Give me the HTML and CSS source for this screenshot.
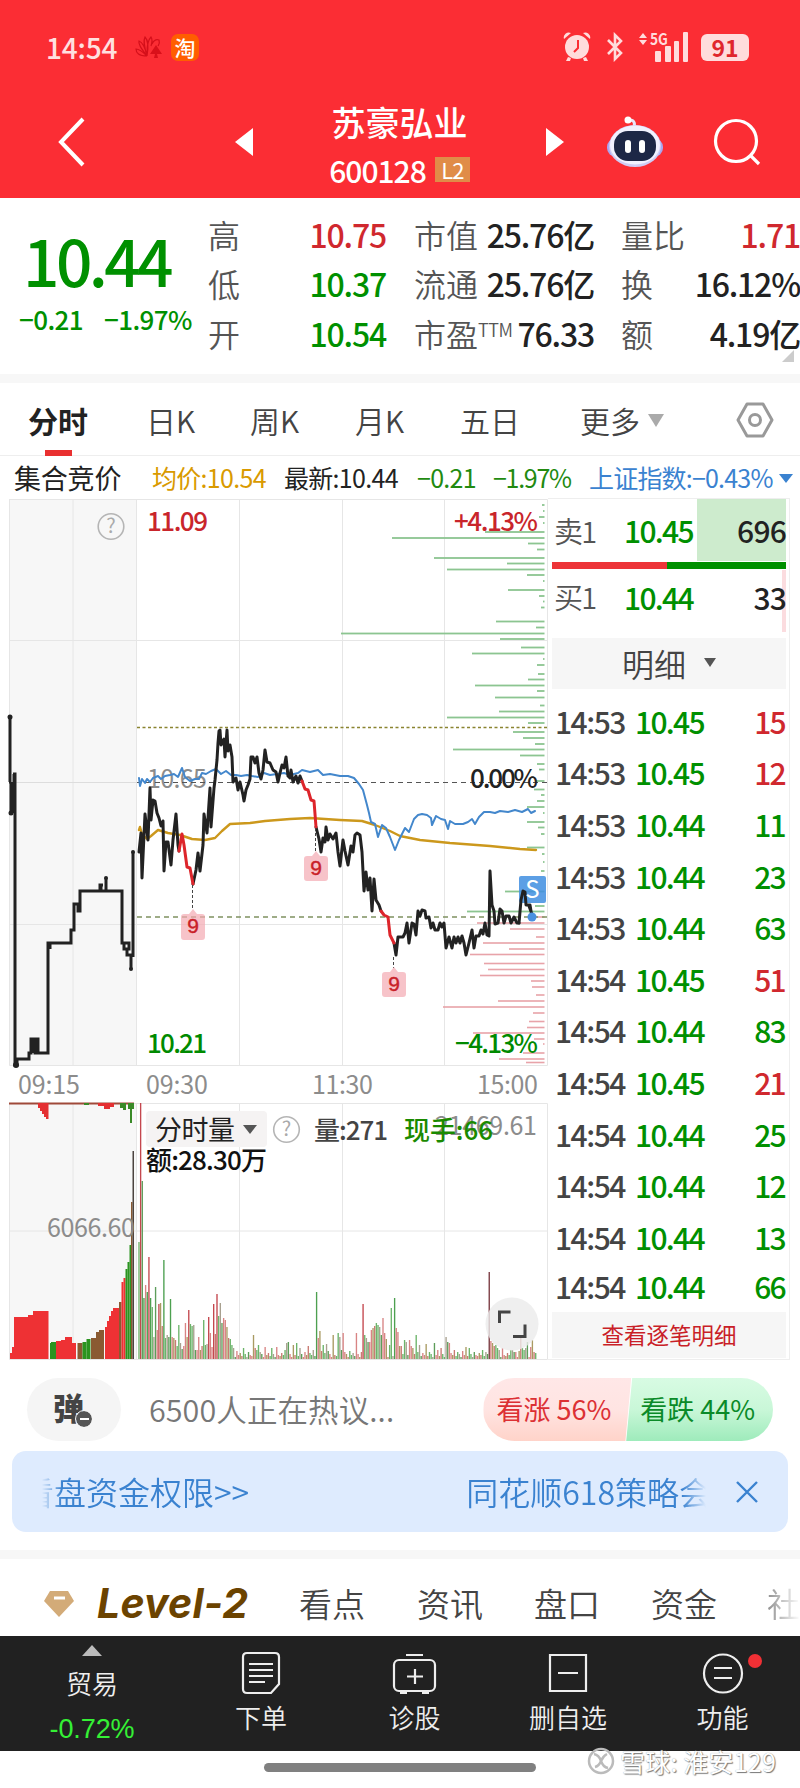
FILE: index.html
```html
<!DOCTYPE html>
<html lang="zh-CN">
<head>
    <meta charset="UTF-8">
    <meta name="viewport" content="width=device-width, initial-scale=1.0">
    <title>苏豪弘业 600128</title>
    <link rel="stylesheet" href="styles.css">
</head>
<body>

    <header class="header">
        <div class="status">
            <span class="clock">14:54</span>
            <svg class="huawei" width="28" height="24" viewBox="0 0 28 24" fill="none" stroke="#d40f1a" stroke-width="1.2">
                <path d="M12 21C4 21 1 18 1 14c2 0 6 2 11 7C6 13 3 9 4 6c3 1 6 6 8 15C9 11 8 6 10 2c3 3 4 8 2 19M12 18c0-8 1-13 4-16 2 3 1 6 0 9M17 9c2-4 4-5 7-4 1 3 0 4-1 6"/>
                <path d="M21 10l-6 9h5l-1 4h4l-1-4h5z" fill="#d9101a" stroke="none"/>
            </svg>
            <span class="tao">淘</span>
            <span class="spacer"></span>
            <svg width="28" height="30" viewBox="0 0 28 30" fill="#ffdcdc">
                <circle cx="14" cy="15" r="12"/>
                <path d="M1 7a5 5 0 0 1 7-6zM27 7a5 5 0 0 0-7-6zM5 25l-2 4h4l1-3zM23 25l2 4h-4l-1-3z"/>
                <path d="M15 8v8l-4 4" fill="none" stroke="#fb2d34" stroke-width="2"/>
            </svg>
            <svg class="bt" width="18" height="30" viewBox="0 0 18 30" fill="none" stroke="#ffdcdc" stroke-width="2.6">
                <path d="M2 8l13 13-6 6V3l6 6L2 22"/>
            </svg>
            <svg class="signal" width="52" height="30" viewBox="0 0 52 30" fill="#ffdcdc">
                <path d="M1 6l4-5 4 5zM1 8h8l-4 5z"/>
                <rect x="17" y="19" width="6" height="11" rx="1"/>
                <rect x="27" y="14" width="6" height="16" rx="1"/>
                <rect x="36" y="9" width="5" height="21" rx="1"/>
                <rect x="45" y="0" width="5" height="30" rx="1"/>
                <text x="12" y="13" font-size="16" font-weight="700" textLength="18" lengthAdjust="spacingAndGlyphs">5G</text>
            </svg>
            <span class="battery">91</span>
        </div>

        <div class="nav">
            <svg width="28" height="50" viewBox="0 0 28 50"><path d="M25 2L3 25l22 23" fill="none" stroke="#fff" stroke-width="4"/></svg>
            <svg width="18" height="28" viewBox="0 0 18 28"><path d="M18 0v28L0 14z" fill="#fff"/></svg>
            <div class="title">
                <div class="name">苏豪弘业</div>
                <div class="code">600128<span class="l2">L2</span></div>
            </div>
            <svg width="18" height="28" viewBox="0 0 18 28"><path d="M0 0v28l18-14z" fill="#fff"/></svg>
            <svg class="robot" width="56" height="52" viewBox="0 0 56 52">
                <path d="M27 11q2-7-5-7" fill="none" stroke="#e8e6fb" stroke-width="3"/>
                <circle cx="21" cy="4" r="3.5" fill="#fff"/>
                <rect x="0" y="22" width="56" height="19" rx="9" fill="#aaa6ef"/>
                <ellipse cx="28" cy="30" rx="26" ry="21" fill="#cfccf5"/>
                <ellipse cx="28" cy="29" rx="25" ry="19.5" fill="#f1f1ff"/>
                <rect x="7" y="15" width="42" height="30" rx="14" fill="#1d2746"/>
                <rect x="18" y="24" width="6" height="13" rx="3" fill="#fff"/>
                <rect x="32" y="24" width="6" height="13" rx="3" fill="#fff"/>
            </svg>
            <svg width="48" height="48" viewBox="0 0 48 48" fill="none" stroke="#fff" stroke-width="3.2"><circle cx="23" cy="23" r="20.5"/><path d="M37 37l9 9"/></svg>
        </div>
    </header>

    <section class="quote">
        <div class="price">
            <div class="big">10.44</div>
            <div class="chg"><span>−0.21</span><span>−1.97%</span></div>
        </div>
        <div class="stats">
            <span class="k">高</span><span class="v red">10.75</span>
            <span class="k k2">市值</span><span class="v">25.76亿</span>
            <span class="k k3">量比</span><span class="v red">1.71</span>
            <span class="k">低</span><span class="v green">10.37</span>
            <span class="k k2">流通</span><span class="v">25.76亿</span>
            <span class="k k3">换</span><span class="v">16.12%</span>
            <span class="k">开</span><span class="v green">10.54</span>
            <span class="k k2">市盈<sup>TTM</sup></span><span class="v">76.33</span>
            <span class="k k3">额</span><span class="v">4.19亿</span>
        </div>
        <i class="corner"></i>
    </section>

    <nav class="tabs">
        <span class="active">分时</span>
        <span>日K</span>
        <span>周K</span>
        <span>月K</span>
        <span>五日</span>
        <span>更多<i class="down"></i></span>
        <svg width="38" height="36" viewBox="0 0 38 36" fill="none" stroke="#999" stroke-width="3"><path d="M11 2h16l9 16-9 16H11L2 18z" stroke-linejoin="round"/><circle cx="19" cy="18" r="5.5"/></svg>
    </nav>

    <div class="info">
        <span class="auction">集合竞价</span>
        <span class="avg">均价:10.54</span>
        <span class="last">最新:10.44</span>
        <span class="d1">−0.21</span>
        <span class="d2">−1.97%</span>
        <span class="index">上证指数:−0.43%<i></i></span>
    </div>

    <main class="main">
        <svg class="chart" width="548" height="864" viewBox="0 498 548 864">
            <rect x="9" y="499" width="127" height="567" fill="#f7f7f7"/>
            <rect x="9" y="1103" width="127" height="256" fill="#f7f7f7"/>
            <path class="grid" d="M9.5 499V1065.500H547.500V499.500H9.500M73 499V1065M136.500 499V1065M239.500 499V1065M342.500 499V1065M444.500 499V1065M9 640.500H547M9 924.500H547M9.500 1103V1359.500H547.500V1103.500H9.500M73 1103V1359M136.500 1103V1359M239.500 1103V1359M342.500 1103V1359M444.500 1103V1359M9 1231H547"/>
            <g id="depth"></g>

            <text class="axis" x="147" y="788" textLength="60">10.65</text>
            <path d="M9 782.500H137" stroke="#ddd"/>
            <path d="M137 782.500H547" stroke="#555" stroke-dasharray="5 4"/>
            <path d="M137 727.500H547" stroke="#8a8430" stroke-width="1.500" stroke-dasharray="3 2.500"/>
            <path d="M137 917H547" stroke="#7f9160" stroke-width="1.300" stroke-dasharray="5 4"/>

            <path class="auctionline" d="M10 717V782H9M11 782V813M14 774V813M13 774H15V1065H17V1059H29V1053H31V1039H38V1053M33 1039V1053M35 1039V1053H48V943H50V949M48 943H71V930H74V904H80V911H78V904H80V891H122V943H129V949H124V943M127 949V955H131V969M80 891H100V885H103M101 885V891M106 878V891M133 852V957"/>
            <g fill="#222">
                <circle cx="10" cy="717" r="2.500"/>
                <circle cx="11" cy="813" r="2.500"/>
                <circle cx="106" cy="878" r="2"/>
                <circle cx="131" cy="969" r="2"/>
                <circle cx="133" cy="852" r="2"/>
                <circle cx="16" cy="1065" r="3"/>
            </g>
            <path class="yellow" d="M139 830L140 827L142 834L147 839L151 836L158 830L168 833L180 835L192 839L205 840L215 838L222 831L230 824L250 823L265 821L290 819L310 818L340 820L362 821L375 825L390 831L400 836L420 840L450 843L490 846L520 849L536 850"/>
            <path class="blue" d="M139 778L140 786L142 779L145 783L147 779L150 782L153 778L158 776L161 779L165 776L170 775L174 774L178 777L182 768L185 777L190 781L195 779L199 779L202 773L206 774L211 771L216 769L221 774L226 771L231 775L236 775L241 776L247 775L252 776L258 777L264 773L270 775L277 774L284 773L290 775L298 773L302 770L310 772L318 770L323 775L330 774L340 776L348 776L354 778L359 784L363 790L367 805L369 813L371 822L375 824L378 837L382 825L386 828L390 837L395 850L399 840L405 828L409 832L414 819L418 815L422 814L427 815L431 818L432 825L436 816L441 819L445 820L448 829L450 821L455 824L463 824L468 822L472 819L475 824L479 817L484 812L490 812L495 813L500 811L508 812L515 810L522 812L528 809L531 813L535 811"/>
            <path class="black" d="M139 852L141 833L142 878L144 835L145 814L148 840L150 788L151 820L153 800L155 801L157 813L159 818L161 826L163 821L164 871L166 842L168 842L171 865L173 840L176 814L178 845L179 851"/>
            <path class="black" d="M193 884L196 870L198 853L200 871L203 845L204 814L207 833L210 788L211 827L214 788L215 780L217 760L218 743L219 731L220 730L221 745L224 739L225 757L227 730L228 751L230 745L232 757L233 782L236 778L238 790L240 782L243 795L244 801L246 790L248 785L250 779L251 757L253 757L255 763L257 757L259 773L261 779L263 770L265 750L267 762L270 763L273 770L276 772L278 782L280 773L282 765L284 768L286 757L288 776L290 778L291 770L293 782L296 776L298 783L300 776L302 781"/>
            <path class="black" d="M316 827L319 839L321 852L323 838L325 842L326 827L328 840L330 834L333 839L336 833L338 852L340 866L343 840L345 851L348 865L351 846L353 852L355 835L357 833L360 835L362 852L364 891L366 872L368 890L370 878L372 911L374 879L376 900L379 905L381 911"/>
            <path class="black" d="M394 943L396 955L398 937L403 937L405 933L407 923L409 943L412 923L414 924L416 935L418 911L420 916L422 910L425 911L426 918L429 917L431 928L433 923L435 930L438 930L440 923L442 927L444 923L446 948L449 937L452 948L454 937L456 943L458 937L460 943L462 936L464 943L466 955L469 943L472 930L474 948L476 936L479 936L481 930L483 934L485 923L487 935L489 936L490 871L492 905L494 911L495 924L498 923L500 909L502 911L504 923L506 916L509 916L511 923L514 917L517 923L519 923"/>
            <path class="fall" d="M179 851L182 834L184 845L187 867L190 868L193 884M302 781L305 789L308 790L311 800L314 801L316 827M381 911L384 915L388 917L390 935L394 943"/>

            <path d="M192.500 885V910M315.500 828V851M393.500 957V968" stroke="#444" stroke-dasharray="3 2"/>
            <g class="nine">
                <path d="M184 914h5l4-5 4 5h5q3 0 3 3v20q0 3-3 3h-18q-3 0-3-3v-20q0-3 3-3z"/>
                <path d="M307 856h5l4-5 4 5h5q3 0 3 3v19q0 3-3 3h-18q-3 0-3-3v-19q0-3 3-3z"/>
                <path d="M385 972h5l4-5 4 5h5q3 0 3 3v19q0 3-3 3h-18q-3 0-3-3v-19q0-3 3-3z"/>
                <text x="193" y="933">9</text>
                <text x="316" y="875">9</text>
                <text x="394" y="991">9</text>
            </g>
            <rect x="519" y="876" width="27" height="27" rx="2" fill="#3f8ee0" fill-opacity=".85"/>
            <path class="black" d="M519 923L521 900L523 891L525 892L526 905L530 905L532 917M529 906L533 917"/>
            <text x="532.500" y="898" font-size="24" fill="#fff" text-anchor="middle">S</text>
            <circle cx="532" cy="917" r="4.500" fill="#4a90e0"/>

            <circle cx="111" cy="526.500" r="12.800" class="ring"/>
            <text x="111" y="533" class="q">?</text>
            <text class="num" x="147" y="531" fill="#c9252b" textLength="61">11.09</text>
            <text class="num" x="454" y="531" fill="#c9252b" textLength="84">+4.13%</text>
            <text class="num" x="470" y="788" fill="#222" textLength="68">0.00%</text>
            <text class="num" x="147" y="1053" fill="#008a00" textLength="60">10.21</text>
            <text class="num" x="455" y="1053" fill="#008a00" textLength="83">−4.13%</text>
            <text class="axis" x="18" y="1094" textLength="62">09:15</text>
            <text class="axis" x="146" y="1094" textLength="62">09:30</text>
            <text class="axis" x="312" y="1094" textLength="61">11:30</text>
            <text class="axis" x="477" y="1094" textLength="61">15:00</text>

            <g id="auctionVol"></g>
            <g id="volume"></g>
            <rect x="146" y="1111" width="121" height="36" rx="4" fill="#f5f3f3"/>
            <text x="155" y="1140" font-size="27" fill="#222" textLength="80">分时量</text>
            <path d="M243 1125h14l-7 9z" fill="#555"/>
            <circle cx="286.500" cy="1129.500" r="12.800" class="ring"/>
            <text x="286.500" y="1136" class="q">?</text>
            <text class="num" x="314" y="1140" fill="#444" textLength="74">量:271</text>
            <text class="axis" x="435" y="1135" textLength="102">21469.61</text>
            <text class="num" x="404" y="1140" fill="#1a8a00" textLength="89">现手:66</text>
            <text class="num" x="146" y="1170" fill="#111" textLength="121">额:28.30万</text>
            <text class="axis" x="47" y="1237" textLength="88">6066.60</text>
            <circle cx="512" cy="1324" r="26.500" fill="#ebebeb" fill-opacity=".8"/>
            <path d="M499.500 1323v-11h11M513 1336.500h12v-12" fill="none" stroke="#444" stroke-width="3"/>
        </svg>

        <aside class="side">
            <div class="order sell"><span class="lbl">卖1</span><span class="p">10.45</span><span class="n">696</span></div>
            <div class="ratio"></div>
            <div class="order buy"><span class="lbl">买1</span><span class="p">10.44</span><span class="n">33</span></div>
            <div class="detail">明细<i></i></div>
            <div class="ticks">
                <div><span>14:53</span><b>10.45</b><em class="red">15</em></div>
                <div><span>14:53</span><b>10.45</b><em class="red">12</em></div>
                <div><span>14:53</span><b>10.44</b><em>11</em></div>
                <div><span>14:53</span><b>10.44</b><em>23</em></div>
                <div><span>14:53</span><b>10.44</b><em>63</em></div>
                <div><span>14:54</span><b>10.45</b><em class="red">51</em></div>
                <div><span>14:54</span><b>10.44</b><em>83</em></div>
                <div><span>14:54</span><b>10.45</b><em class="red">21</em></div>
                <div><span>14:54</span><b>10.44</b><em>25</em></div>
                <div><span>14:54</span><b>10.44</b><em>12</em></div>
                <div><span>14:54</span><b>10.44</b><em>13</em></div>
                <div><span>14:54</span><b>10.44</b><em>66</em></div>
            </div>
            <div class="all">查看逐笔明细</div>
        </aside>
    </main>

    <section class="talk">
        <div class="dan">弹<i></i></div>
        <span class="hot">6500人正在热议...</span>
        <div class="vote">
            <span class="up">看涨 56%</span>
            <span class="dn">看跌 44%</span>
        </div>
    </section>

    <section class="banner">
        <div class="marquee"><span>看盘资金权限&gt;&gt;</span><span>同花顺618策略会</span></div>
        <svg width="22" height="22" viewBox="0 0 22 22"><path d="M1 1l20 20M21 1L1 21" stroke="#3a82d0" stroke-width="2.4"/></svg>
    </section>

    <nav class="level">
        <svg width="32" height="28" viewBox="0 0 32 28"><path d="M7 1h18l6 10-15 16L1 11z" fill="#d3ab78"/><path d="M11 8h11" stroke="#fff" stroke-width="3"/></svg>
        <span class="l2title">Level-2</span>
        <span>看点</span>
        <span>资讯</span>
        <span>盘口</span>
        <span>资金</span>
        <span class="fade">社</span>
    </nav>

    <footer class="bottom">
        <div class="trade"><i></i><span>贸易</span><b>-0.72%</b></div>
        <div>
            <svg width="40" height="44" viewBox="0 0 40 44"><path d="M6 2h28q4 0 4 4v27l-8 9H6q-4 0-4-4V6q0-4 4-4zM8 13h24M8 19h24M8 25h24M8 31h16"/></svg>
            <span>下单</span>
        </div>
        <div>
            <svg width="46" height="44" viewBox="0 0 46 44"><rect x="2" y="9" width="41" height="31" rx="5"/><path d="M14 4h17M23 18v15M15 25.500h16M8 42h7M30 42h7"/></svg>
            <span>诊股</span>
        </div>
        <div>
            <svg width="40" height="44" viewBox="0 0 40 44"><path d="M2 4h36v36H2zM10 22h20"/></svg>
            <span>删自选</span>
        </div>
        <div class="more">
            <svg width="42" height="44" viewBox="0 0 42 44"><ellipse cx="21" cy="22.500" rx="19" ry="19"/><path d="M12 17h18M12 27h18"/></svg>
            <span>功能</span>
            <i></i>
        </div>
    </footer>

    <div class="home">
        <i class="bar"></i>
        <div class="mark">
            <svg width="28" height="28" viewBox="0 0 28 28" fill="none" stroke="#bbb" stroke-width="2.500"><circle cx="14" cy="14" r="12"/><path d="M7 7q5 1 7 7t7 7M20 7q-4 2-6 7t-6 6"/></svg>
            <span>雪球: 淮安129</span>
        </div>
    </div>

    <script src="chart.js"></script>
</body>
</html>
```
FILE: styles.css
```css
* {
    box-sizing: border-box;
}
body {
    margin: 0;
    width: 800px;
    background: #fff;
    color: #222;
    font-family: "Noto Sans CJK SC", "Noto Sans", sans-serif;
    line-height: 1;
    overflow-x: hidden;
}
svg {
    display: block;
    flex: none;
}
i, em {
    font-style: normal;
}
.red { color: #d0282e; }
.green { color: #009000; }

/* header */
.header {
    height: 198px;
    background: #fb2d34;
    color: #fff;
}
.status {
    height: 96px;
    padding: 0 51px 2px 46px;
    display: flex;
    align-items: center;
}
.clock {
    width: 89px;
    font-size: 28px;
    font-weight: 500;
    letter-spacing: -.2px;
    color: #ffe0e0;
}
.tao {
    width: 28px;
    height: 27px;
    margin-left: 8px;
    border-radius: 7px;
    background: #ff5e00;
    font-size: 21px;
    font-weight: 500;
    line-height: 26px;
    text-align: center;
}
.spacer {
    flex: 1;
}
.bt {
    margin-left: 15px;
}
.signal {
    margin: 0 11px 0 14px;
    overflow: visible;
}
.battery {
    width: 48px;
    height: 27px;
    border-radius: 6px;
    background: #ffdcdc;
    color: #e0262c;
    font-size: 23px;
    font-weight: 700;
    line-height: 26px;
    text-align: center;
}
.nav {
    height: 102px;
    padding-left: 58px;
    display: grid;
    grid-template-columns: 177px 18px 293px 61px 106px 48px;
    align-items: center;
}
.nav > svg {
    margin-top: -10px;
}
.title {
    text-align: center;
    margin-top: 3px;
}
.name {
    font-size: 34px;
    font-weight: 500;
    height: 42px;
}
.code {
    display: flex;
    align-items: center;
    justify-content: center;
    height: 46px;
    font-size: 30px;
    font-weight: 500;
    letter-spacing: -1px;
}
.l2 {
    width: 35px;
    height: 25px;
    margin-left: 9px;
    background: #e08c48;
    font-size: 22px;
    font-weight: 400;
    line-height: 24px;
}

/* quote */
.quote {
    height: 185px;
    display: flex;
    padding-top: 11px;
    border-bottom: 9px solid #f7f7f7;
    position: relative;
}
.price {
    width: 209px;
    color: #009000;
}
.big {
    height: 77px;
    padding: 18px 0 0 23px;
    font-size: 64px;
    font-weight: 500;
    letter-spacing: -3.6px;
}
.chg {
    display: flex;
    gap: 21px;
    padding: 20px 0 0 19px;
    font-size: 26px;
    font-weight: 500;
    letter-spacing: -.6px;
}
.stats {
    display: grid;
    grid-template-columns: 40px 138px 96px 112px 68px 138px;
    grid-template-rows: repeat(3, 49.5px);
    align-items: center;
    font-size: 32px;
}
.k {
    color: #555;
    font-weight: 350;
    white-space: nowrap;
}
.k2 { padding-left: 28px; }
.k3 { padding-left: 27px; }
.k sup {
    font-size: 18px;
    vertical-align: 10px;
    letter-spacing: -.5px;
}
.v {
    text-align: right;
    font-weight: 500;
    letter-spacing: -1.2px;
    white-space: nowrap;
}
.corner {
    position: absolute;
    right: 6px;
    bottom: 12px;
    border-left: 12px solid transparent;
    border-bottom: 12px solid #ccc;
}

/* period tabs */
.tabs {
    height: 73px;
    padding: 0 0 2px 28px;
    border-bottom: 1px solid #eee;
    display: grid;
    grid-template-columns: 118px 104px 105px 105px 120px 156px 38px;
    align-items: center;
    font-size: 30px;
    font-weight: 350;
    color: #444;
}
.active {
    height: 73px;
    width: 60px;
    margin-top: 1px;
    line-height: 73px;
    font-weight: 700;
    color: #222;
    background: linear-gradient(#e93030, #e93030) 17px 66px / 27px 6px no-repeat;
}
.down {
    display: inline-block;
    margin: 0 0 6px 8px;
    border: 8.5px solid transparent;
    border-top: 13px solid #aaa;
    border-bottom: 0;
}
.info {
    height: 42px;
    padding-left: 14px;
    display: grid;
    grid-template-columns: 138px 132px 133px 76px 96px 211px;
    align-items: center;
    font-size: 25px;
    letter-spacing: -.7px;
    white-space: nowrap;
}
.auction {
    font-size: 27px;
    letter-spacing: -.2px;
}
.avg { color: #d99a00; }
.d1, .d2 { color: #228a10; }
.d2 { letter-spacing: -1.3px; }
.index {
    color: #3a82d0;
    letter-spacing: -.8px;
}
.index i {
    display: inline-block;
    margin: 0 0 5px 6px;
    border: 7px solid transparent;
    border-top: 9px solid #3a82d0;
    border-bottom: 0;
}

/* chart */
.main {
    display: flex;
    height: 864px;
}
.grid {
    fill: none;
    stroke: #e6e6e6;
}
.auctionline {
    fill: none;
    stroke: #222;
    stroke-width: 3;
}
.black, .fall, .blue, .yellow {
    fill: none;
    stroke: #222;
    stroke-width: 3;
    stroke-linejoin: round;
    stroke-linecap: round;
}
.fall { stroke: #dd252b; }
.blue {
    stroke: #4387cc;
    stroke-width: 2;
}
.yellow {
    stroke: #cc981c;
    stroke-width: 2.4;
}
.num {
    font-size: 26px;
    font-weight: 500;
}
.axis {
    font-size: 25px;
    fill: #8c8c8c;
}
.ring {
    fill: none;
    stroke: #b5b5b5;
    stroke-width: 1.6;
}
.q {
    font-size: 20px;
    fill: #aaa;
    text-anchor: middle;
}
.nine path {
    fill: #f4a9b2;
    fill-opacity: .7;
}
.nine text {
    font-family: "Liberation Sans", sans-serif;
    font-size: 21px;
    fill: #c91f28;
    stroke: #c91f28;
    stroke-width: .4;
    text-anchor: middle;
}

/* order book and ticks */
.side {
    width: 242px;
    height: 862px;
    padding: 0 3px 0 4px;
    border: 1px solid #eee;
    border-left: 0;
}
.order {
    height: 62px;
    display: grid;
    grid-template-columns: 72px 73px 89px;
    align-items: center;
    font-size: 30px;
    font-weight: 500;
    letter-spacing: -1.7px;
}
.lbl {
    padding-left: 2px;
    color: #555;
    font-size: 29px;
    font-weight: 350;
}
.p { color: #009000; }
.n {
    text-align: right;
    letter-spacing: -.8px;
}
.sell {
    background: linear-gradient(#cdebcd, #cdebcd) right / 89px 100% no-repeat;
}
.buy {
    background: linear-gradient(#fbdcdf, #fbdcdf) right / 4px 100% no-repeat;
    padding-bottom: 9px;
}
.ratio {
    height: 7px;
    margin: 1px 0;
    background: linear-gradient(90deg, #ed3438 49%, #009000 49%);
}
.detail {
    height: 51px;
    margin-top: 6px;
    padding-bottom: 2px;
    background: #f6f6f6;
    color: #444;
    display: flex;
    align-items: center;
    justify-content: center;
    gap: 18px;
    font-size: 32px;
    font-weight: 350;
}
.detail i {
    border: 6.5px solid transparent;
    border-top: 9px solid #555;
    border-bottom: 0;
}
.ticks {
    height: 623px;
    padding-top: 6px;
}
.ticks div {
    height: 51.6px;
    display: grid;
    grid-template-columns: 80px 74px 76px;
    align-items: center;
    padding-left: 3px;
    font-size: 30px;
    letter-spacing: -1.7px;
}
.ticks div:last-child {
    height: 46px;
}
.ticks span {
    color: #444;
    font-weight: 500;
    letter-spacing: -1.5px;
}
.ticks b, .ticks em {
    font-weight: 500;
    color: #009000;
}
.ticks em {
    text-align: right;
}
.ticks em.red {
    color: #d0282e;
}
.all {
    height: 46px;
    background: #f6f6f6;
    color: #c91f28;
    font-size: 22.5px;
    line-height: 44px;
    text-align: center;
}

/* comments */
.talk {
    height: 89px;
    padding: 16px 27px 10px;
    display: flex;
    align-items: center;
}
.dan {
    position: relative;
    width: 94px;
    height: 63px;
    padding-left: 26px;
    border-radius: 32px;
    background: #f5f5f5;
    color: #444;
    font-size: 31px;
    font-weight: 900;
    line-height: 57px;
}
.dan i {
    position: absolute;
    left: 49px;
    top: 33px;
    width: 16px;
    height: 16px;
    border-radius: 50%;
    background: linear-gradient(#fff, #fff) center / 9px 2px no-repeat #555;
    outline: 1px solid #f5f5f5;
}
.hot {
    width: 363px;
    padding-left: 28px;
    font-size: 30.5px;
    font-weight: 350;
    color: #777;
    letter-spacing: .1px;
}
.vote {
    width: 290px;
    display: flex;
    border-radius: 32px;
    overflow: hidden;
    height: 63px;
    font-size: 27px;
    line-height: 61px;
    white-space: nowrap;
}
.up, .dn {
    letter-spacing: 0;
}
.up {
    width: 149px;
    padding-left: 13px;
    color: #dc3034;
    background: linear-gradient(#ffe7e7, #ffe4e2 50%, #ffd3c9);
    clip-path: polygon(0 0, 100% 0, 142px 100%, 0 100%);
}
.dn {
    width: 148px;
    margin-left: -5px;
    padding-left: 14px;
    color: #0a8a28;
    background: linear-gradient(#d8fbe3, #c9f7d8 50%, #9eebbb);
    clip-path: polygon(6px 0, 100% 0, 100% 100%, 0 100%);
}
.banner {
    height: 81px;
    margin: 0 12px;
    padding: 0 30px;
    border-radius: 14px;
    background: #deebfe;
    color: #3a82d0;
    display: flex;
    align-items: center;
    justify-content: space-between;
    font-size: 32px;
    font-weight: 350;
    white-space: nowrap;
}
.marquee {
    width: 664px;
    height: 48px;
    line-height: 46px;
    overflow: hidden;
    display: flex;
    justify-content: space-between;
    -webkit-mask-image: linear-gradient(90deg, transparent, #000 20px, #000 640px, transparent);
    mask-image: linear-gradient(90deg, transparent, #000 20px, #000 640px, transparent);
}
.marquee span:first-child {
    margin-left: -20px;
}
.marquee span:last-child {
    margin-right: -5px;
}

/* level-2 tabs */
.level {
    height: 86px;
    margin-top: 18px;
    padding: 0 0 0 43px;
    border-top: 9px solid #f7f7f7;
    display: grid;
    grid-template-columns: 54px 202px 118px 117px 117px 116px 33px;
    align-items: center;
    font-size: 33px;
    font-weight: 350;
    color: #444;
}
.level span {
    padding-top: 12px;
}
.level svg {
    margin-top: 13px;
}
.level .l2title {
    font-family: Inter, sans-serif;
    font-size: 41px;
    font-weight: 700;
    font-style: italic;
    letter-spacing: .2px;
    color: #6b4300;
}
.fade {
    -webkit-mask-image: linear-gradient(90deg, rgba(0, 0, 0, .6), transparent);
    mask-image: linear-gradient(90deg, rgba(0, 0, 0, .6), transparent);
}

/* bottom bar */
.bottom {
    height: 115px;
    background: #212121;
    color: #eee;
    display: grid;
    grid-template-columns: 184px 154px 153px 154px 155px;
    font-size: 26px;
    font-weight: 350;
}
.bottom > div {
    display: flex;
    flex-direction: column;
    align-items: center;
    padding-top: 15px;
    position: relative;
}
.bottom svg {
    fill: none;
    stroke: #eee;
    stroke-width: 2.2;
}
.bottom svg + span {
    margin-top: 9px;
}
.bottom .trade {
    padding-top: 9px;
}
.trade i {
    border: 10px solid transparent;
    border-bottom: 11px solid #bbb;
    border-top: 0;
}
.trade span {
    margin-top: 14px;
}
.trade b {
    margin-top: 18px;
    font: 400 27px "Liberation Sans", sans-serif;
    letter-spacing: -.1px;
    line-height: 30px;
    color: #35f035;
}
.more i {
    position: absolute;
    left: 103px;
    top: 18px;
    width: 14px;
    height: 14px;
    border-radius: 50%;
    background: #f03035;
}
.home {
    position: relative;
    height: 37px;
    display: flex;
    justify-content: center;
}
.bar {
    width: 272px;
    height: 9px;
    margin-top: 12px;
    border-radius: 5px;
    background: #808080;
}
.mark {
    position: absolute;
    left: 587px;
    top: -4px;
    display: flex;
    align-items: center;
    gap: 5px;
    color: #fff;
    font-size: 25px;
    letter-spacing: .2px;
    white-space: nowrap;
    text-shadow: 1px 1px 1px #777, 0 0 1px #999;
}
```
FILE: chart.js
```js
const NS = 'http://www.w3.org/2000/svg';

function rect(parent, x, y, w, h, fill) {
    const r = document.createElementNS(NS, 'rect');
    r.setAttribute('x', x);
    r.setAttribute('y', y);
    r.setAttribute('width', w);
    r.setAttribute('height', h);
    r.setAttribute('fill', fill);
    parent.appendChild(r);
}

// order depth: [y, left edge], drawn to the right border
const asks = [[505,542],[511,543],[517,539],[523,543],[532,485],[538,392],[543.5,528],[549.5,537],[558,434],[563.5,507],[569.5,447],[575,527],[581,543],[590,508],[596,539],[601.5,543],[607.5,541],[621.5,496],[627.5,536],[633.5,341],[639,500],[647.5,521],[653.5,472],[659,543],[665,537],[674,538],[679.5,528],[685.5,475],[691,537],[697.5,495],[705.5,540],[711.5,499],[717.5,447],[723,528],[732,513],[738,523],[744,535],[749.5,453],[755.5,520],[764,537],[769.5,539],[781,536],[789.5,534],[795,541],[801,537],[807,527],[813,543],[822,527],[827.5,538],[834,541],[847.5,527],[854,542],[862,543],[871,541],[891.5,505],[906,535],[911.5,467]];
const bids = [[917,534],[923,477],[929,510],[937,536],[943,483],[949,509],[954.5,470],[963.5,484],[969.5,488],[975.5,480],[981,531],[987,532],[995,536],[1001,498],[1007,443],[1013,533],[1021.5,529],[1027.5,527],[1033,473],[1039,534],[1044,543],[1053,523],[1059,499],[1062.5,526]];
const depth = document.getElementById('depth');
asks.forEach(([y, x]) => rect(depth, x, y - 0.9, 544.5 - x, 1.8, '#8cc591'));
bids.forEach(([y, x]) => rect(depth, x, y - 0.8, 544.5 - x, 1.6, '#e8a3a9'));

// call auction volume: [x, width, top, colour]
const auction = document.getElementById('auctionVol');
[[10,2,1353,'r'],[12,2,1347,'r'],[14,14,1317,'r'],[28,5,1315,'r'],[33,15.5,1311,'r'],[50,1,1343,'g'],[51,5,1342,'g'],[56,5,1341,'r'],[61,4,1340,'r'],[65,7,1337,'r'],[72,4,1343,'r'],[77.5,5,1343,'b'],[82.5,4,1342,'g'],[86.5,4,1339,'g'],[91,5,1338,'b'],[96,3,1332,'b'],[99,5,1330,'b'],[105,2,1327,'r'],[107,2,1321,'r'],[109,2,1316,'r'],[111,2,1311,'r'],[113,6,1308,'r'],[119,2.5,1302,'b'],[121.5,2,1282,'r'],[123.5,2,1278,'r'],[125.5,2,1269,'g'],[127.5,2,1262,'g'],[129.5,1.5,1245,'g'],[131,1.5,1202,'b'],[132.5,1.5,1151,'k']].forEach(([x, w, y, c]) => {
    rect(auction, x, y, w, 1359 - y, { r: '#ee3134', g: '#2b9420', b: '#8a5a32', k: '#4c4440' }[c]);
});
rect(auction, 9, 1102.5, 125, 2, '#a04a3a');
[[38,2,5],[40,2,8],[42,2,11],[44,2,14],[46,2.5,16],[98,6,3],[104,6,6],[110,4,4]].forEach(([x, w, h]) => rect(auction, x, 1103, w, h, '#e43032'));
[[84,5,2],[120,3,5],[123,3,7],[128,2,6],[130,2,20],[132,2,6]].forEach(([x, w, h]) => rect(auction, x, 1103, w, h, '#3a8a28'));

// minute volume: x -> bar top for the tall bars, the rest stay near the floor
const tall = {139:1242,140.6:1103,142.3:1181,144:1298,145.6:1285,147.3:1292,148.9:1257,150.6:1298,152.3:1307,153.9:1337,155.6:1287,157.2:1330,158.9:1304,160.5:1303,162.2:1326,163.9:1260,165.5:1338,167.2:1335,168.8:1337,170.5:1299,172.2:1337,173.8:1338,175.5:1340,177.1:1346,178.8:1325,180.5:1343,182.1:1349,183.8:1346,185.4:1323,187.1:1337,188.8:1310,190.4:1324,192.1:1326,193.7:1325,195.4:1350,197.1:1350,198.7:1337,200.4:1350,202:1346,203.7:1320,205.4:1345,207:1344,208.7:1317,210.3:1333,212:1347,213.7:1304,215.3:1334,217:1294,218.6:1316,220.3:1303,222:1323,223.6:1318,225.3:1320,226.9:1327,228.6:1338,230.3:1339,231.9:1345,233.6:1348,253:1335,255:1348,259:1345,265:1347,277:1347,287:1343,289:1342,294:1345,297:1343,309:1346,316:1292,318:1338,319.5:1331,323:1345,326:1344,329:1351,334:1335,338:1333,340:1337,343:1333,349:1351,357:1333,363:1304,365:1335,367:1338,368.5:1342,370:1342,372:1330,373.5:1328,375:1326,377:1323,378.5:1325,380:1327,382:1335,383.5:1318,385:1333,387:1339,389:1345,390.5:1308,392:1342,394:1298,396:1328,397.5:1332,399:1346,402:1346,405:1340,407:1342,409:1340,412:1346,417:1335,419:1345,426:1344,434:1343,438:1350,446:1337,448:1342,449.5:1343,466:1347,470:1348,480:1353,489.5:1272,491:1341,493:1343,495:1346,496.5:1345,499:1350,503:1348,512:1350,515:1352,520:1338,522:1348,524:1350,527:1342,530.5:1347,532.5:1340,534:1352};
const low = [3, 6, 4, 9, 3, 7, 5, 2, 8, 4, 6, 3, 11, 5, 2, 7, 4];
const tops = new Array(240).fill(0).map((_, i) => 1359 - low[i % low.length]);
Object.keys(tall).forEach(x => {
    tops[Math.min(239, Math.round((x - 139) / 1.66))] = tall[x];
});
const colours = ['#6cb46a', '#c97a72', '#a99a62', '#d88484', '#5d9d5a', '#a8a08f'];
const volume = document.getElementById('volume');
tops.forEach((y, i) => {
    let c = colours[(i * 5 + (i >> 2)) % colours.length];
    if (i === 1 || y === 1257 || y === 1310 || y === 1317 || y === 1304 || y === 1294) c = '#c4474e';
    if (y === 1260 || y === 1299 || y === 1292 || y === 1298) c = '#4da050';
    if (y === 1272) c = '#7a3940';
    rect(volume, 138.3 + i * 1.66, y, 1.35, 1359 - y, c);
});
```
